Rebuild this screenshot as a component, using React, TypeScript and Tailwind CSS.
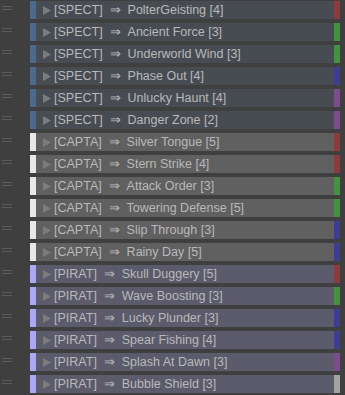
import React from 'react';

type Row = { group: 'SPECT' | 'CAPTA' | 'PIRAT'; name: string; cost: number; tag: string };

const rows: Row[] = [
  { group: 'SPECT', name: 'PolterGeisting', cost: 4, tag: 'red' },
  { group: 'SPECT', name: 'Ancient Force', cost: 3, tag: 'green' },
  { group: 'SPECT', name: 'Underworld Wind', cost: 3, tag: 'green' },
  { group: 'SPECT', name: 'Phase Out', cost: 4, tag: 'blue' },
  { group: 'SPECT', name: 'Unlucky Haunt', cost: 4, tag: 'purple' },
  { group: 'SPECT', name: 'Danger Zone', cost: 2, tag: 'purple' },
  { group: 'CAPTA', name: 'Silver Tongue', cost: 5, tag: 'red' },
  { group: 'CAPTA', name: 'Stern Strike', cost: 4, tag: 'red' },
  { group: 'CAPTA', name: 'Attack Order', cost: 3, tag: 'green' },
  { group: 'CAPTA', name: 'Towering Defense', cost: 5, tag: 'green' },
  { group: 'CAPTA', name: 'Slip Through', cost: 3, tag: 'blue' },
  { group: 'CAPTA', name: 'Rainy Day', cost: 5, tag: 'blue' },
  { group: 'PIRAT', name: 'Skull Duggery', cost: 5, tag: 'red' },
  { group: 'PIRAT', name: 'Wave Boosting', cost: 3, tag: 'green' },
  { group: 'PIRAT', name: 'Lucky Plunder', cost: 3, tag: 'blue' },
  { group: 'PIRAT', name: 'Spear Fishing', cost: 4, tag: 'blue' },
  { group: 'PIRAT', name: 'Splash At Dawn', cost: 3, tag: 'purple' },
  { group: 'PIRAT', name: 'Bubble Shield', cost: 3, tag: 'gray' },
];

const groupStyle = {
  SPECT: { bar: 'bg-[#4b6a8e]', row: 'bg-[#474c53]' },
  CAPTA: { bar: 'bg-[#e8e8e8]', row: 'bg-[#606060]' },
  PIRAT: { bar: 'bg-[#a9a9f5]', row: 'bg-[#5b5b6b]' },
};

const tagStyle: Record<string, string> = {
  red: 'bg-[#8c3b3e]',
  green: 'bg-[#43923f]',
  blue: 'bg-[#3d3d92]',
  purple: 'bg-[#7e4b8e]',
  gray: 'bg-[#a3a3a3]',
};

export default function App() {
  return (
    <div className="w-[345px] h-[395px] bg-[#3f3f3f] pt-px flex flex-col gap-1 overflow-hidden font-['Liberation_Sans',Arial,sans-serif]">
      {rows.map((r, i) => (
        <div key={i} className="flex items-stretch h-[18px] shrink-0">
          {/* drag handle */}
          <div className="w-[30px] flex flex-col gap-[2px] pl-[2px] pt-[5px]">
            <div className="w-[10px] h-px bg-[#5c5c5c]" />
            <div className="w-[10px] h-px bg-[#5c5c5c]" />
          </div>
          <div className={`flex-1 mr-[5px] flex items-center ${groupStyle[r.group].row}`}>
            <div className={`w-[6px] self-stretch ${groupStyle[r.group].bar}`} />
            <svg width="8" height="9" viewBox="0 0 8 9" className="ml-[7px]">
              <path d="M0 0 L8 4.5 L0 9 Z" fill="#7c7c7c" />
            </svg>
            <span className="ml-[3px] text-[12.5px] leading-none text-[#b9b9b9] whitespace-nowrap">
              [{r.group}]&nbsp;&nbsp;⇒&nbsp;&nbsp;{r.name} [{r.cost}]
            </span>
            <div className="flex-1" />
            <div className={`w-[6px] self-stretch ${tagStyle[r.tag]}`} />
          </div>
        </div>
      ))}
    </div>
  );
}
